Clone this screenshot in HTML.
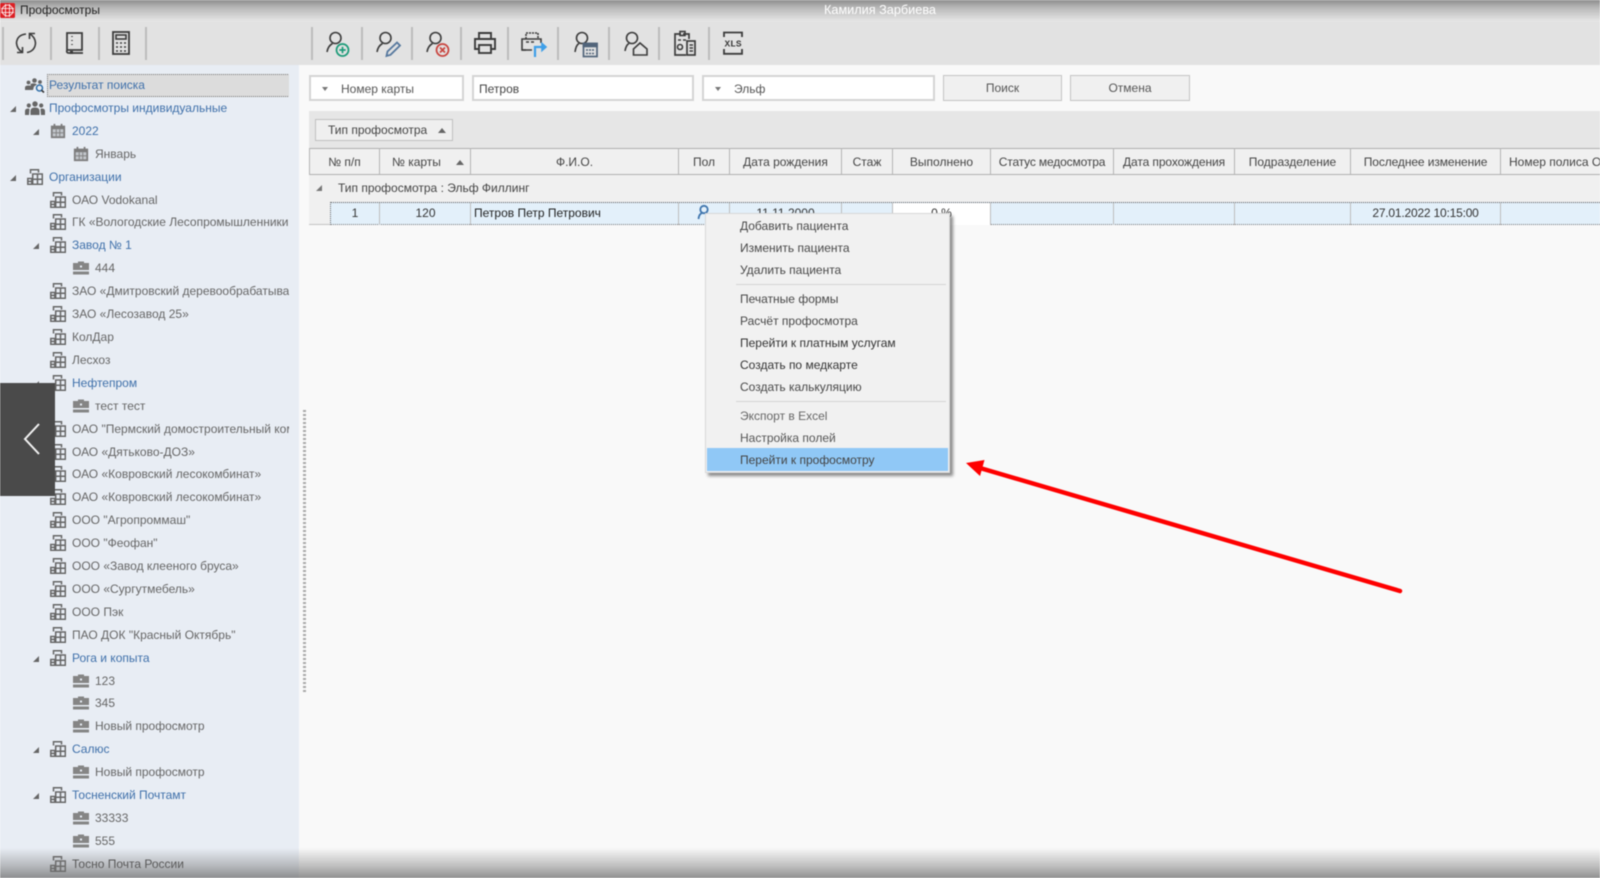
<!DOCTYPE html>
<html><head><meta charset="utf-8"><style>
html,body{margin:0;padding:0;width:1600px;height:878px;overflow:hidden;background:#f9f9f9}
*{box-sizing:border-box}
body{font-family:"Liberation Sans","Noto Sans CJK SC",sans-serif;font-size:12px;color:#444;position:relative}
#w{position:absolute;left:0;top:0;width:1600px;height:878px;filter:blur(.55px);overflow:hidden}
.a{position:absolute;white-space:nowrap}
#side{position:absolute;left:0;top:65px;width:299px;height:813px;background:#e8edf4}
#tree{position:absolute;left:0;top:9px;width:289px;overflow:hidden}
.r{position:relative;height:22.91px;line-height:22.91px;white-space:nowrap;color:#666;font-size:12px}
.r.b{color:#3f70aa}
.r svg{position:absolute}
.r .t{position:absolute;top:0}
.l0 .t{left:49px}.l0 svg{left:26px;top:3px}
.l1 .t{left:72px}.l1 svg{left:50px;top:3px}
.l2 .t{left:95px}.l2 svg{left:73px;top:4px}
.r i{position:absolute;width:0;height:0;border-left:6px solid transparent;border-bottom:6px solid #666;top:9px}
.l0 i{left:10px}.l1 i{left:33px}
.box{position:absolute;background:#fff;border:2px solid #d4d4d4;height:26px;top:75px;line-height:24px;color:#555}
.btn{position:absolute;background:#f0f0f0;border:1.5px solid #c4c4c4;height:26px;top:75px;line-height:24px;text-align:center;color:#555}
.dd{position:absolute;left:11px;top:10px;width:0;height:0;border:3px solid transparent;border-top:4px solid #777}
.hc{position:absolute;top:148px;height:27px;margin-left:1px;border-right:1.5px solid #b4b4b4;text-align:center;line-height:28.5px;color:#444;font-size:12px;overflow:hidden;white-space:nowrap}
.dc{position:absolute;top:203px;height:22px;margin-left:1px;border-right:1px solid #bdbdbd;line-height:21px;text-align:center;color:#333;white-space:nowrap;overflow:hidden}
#menu{position:absolute;left:705px;top:213px;width:245px;height:260px;background:#f1f1f1;border:1px solid #d8d8d8;box-shadow:3px 3px 3px rgba(0,0,0,.45)}
.m{position:absolute;left:34px;color:#484848;font-size:12px;line-height:22px;white-space:nowrap}
.s{position:absolute;left:30px;right:3px;height:1px;background:#d4d4d4}
.v{position:absolute;top:27px;width:1.5px;height:33px;background:#bcbcbc}
.ic{position:absolute;fill:none;stroke:#3c3c3c;stroke-width:1.6}
</style></head><body><div id="w">

<svg width="0" height="0" style="position:absolute"><defs>
<symbol id="bld" viewBox="0 0 16 16"><g fill="none" stroke="#666" stroke-width="1.5"><path d="M3.500 4.500V.8H11.500V3.500"/><rect x="5.700" y="5" width="9.600" height="10.300"/><path d="M10.500 5V15.300M5.700 10.200H15.300"/><rect x=".8" y="9.500" width="4" height="5.800"/><path d="M.8 12.400H4.800"/></g></symbol>
<symbol id="cal" viewBox="0 0 18 18"><path fill="#7c7c7c" d="M1 3H4V1H6V3H12V1H14V3H17V17H1Z"/><rect x="3" y="7" width="12" height="8" fill="#c2c6cb"/><path d="M3 11H15M7 7V15M11 7V15" stroke="#7c7c7c"/></symbol>
<symbol id="brf" viewBox="0 0 16 14"><path fill="#858585" d="M0 2H5V.5H11V2H16V9H0Z"/><rect x="0" y="10.500" width="16" height="3" fill="#858585"/><rect x="7" y="4.500" width="2" height="2" fill="#e8edf4"/></symbol>
<symbol id="ppl" viewBox="0 0 20 14"><g fill="#666"><circle cx="10" cy="3" r="2.700"/><circle cx="3.800" cy="4.500" r="2.100"/><circle cx="16.200" cy="4.500" r="2.100"/><path d="M5.500 14V10Q5.500 6.500 10 6.500T14.500 10V14Z"/><path d="M0 14V10Q0 7.500 3.500 7.500L4.500 8 4 14ZM20 14V10Q20 7.500 16.500 7.500L15.500 8 16 14Z"/></g></symbol>
<symbol id="pps" viewBox="0 0 20 15"><g fill="#666"><circle cx="9.500" cy="2.500" r="2.300"/><circle cx="3.500" cy="4.500" r="1.900"/><circle cx="15" cy="4" r="1.900"/><path d="M0 12V9.500Q0 7.500 3.500 7.500T7 9.500V12ZM5.500 6Q9.500 4.500 12 6.500L9 8.500 8 12H6.500Z"/></g><circle cx="14.500" cy="10" r="3" fill="none" stroke="#2f6ea8" stroke-width="1.500"/><path d="M16.500 12.200L19 14.500" stroke="#333" stroke-width="1.600"/></symbol>
</defs></svg>

<!-- title bar -->
<div class="a" style="left:0;top:0;width:1600px;height:22px;background:linear-gradient(#8d8d8d,#b8b8b8 35%,#e8e8e8)"></div>
<svg class="a" style="left:0;top:3px" width="15" height="15" viewBox="0 0 15 15"><rect x="0" y="0" width="15" height="15" rx="1.500" fill="#dd1f24"/><circle cx="7.500" cy="7.500" r="5.500" fill="none" stroke="#fff" stroke-width=".8"/><path d="M1 5.500H14M1 9.500H14M5.500 1V14M9.500 1V14" stroke="#fff" stroke-width=".8"/></svg>
<div class="a" style="left:20px;top:3px;line-height:15px;font-size:12px;color:#222">Профосмотры</div>
<div class="a" style="left:824px;top:2px;line-height:17px;font-size:12.700px;color:#fff">Камилия Зарбиева</div>

<!-- toolbar -->
<div class="a" style="left:0;top:22px;width:1600px;height:43px;background:#e2e2e2"></div>
<div class="v" style="left:2px"></div><div class="v" style="left:50px"></div><div class="v" style="left:98px"></div><div class="v" style="left:145px"></div>
<div class="v" style="left:311px"></div><div class="v" style="left:361px"></div><div class="v" style="left:411px"></div><div class="v" style="left:460px"></div><div class="v" style="left:507px"></div><div class="v" style="left:557px"></div><div class="v" style="left:608px"></div><div class="v" style="left:658px"></div><div class="v" style="left:708px"></div>

<!-- refresh -->
<svg class="ic" style="left:14px;top:30px" width="24" height="26" viewBox="0 0 24 26"><path d="M12 4Q3 5 2.500 13Q3 19 8 22"/><path d="M3 22.500H8.500V17"/><path d="M13 22.500Q21 21 21.500 13Q21 7 16 4"/><path d="M21 3.500H15.500V9"/></svg>
<!-- book -->
<svg class="ic" style="left:65px;top:31px" width="20" height="24" viewBox="0 0 20 24"><path d="M2 19V2H17V19H2ZM2 19Q1 22 4 22H18" stroke-width="1.800"/><path d="M7 5V6M7 9V10M7 13V14"/><rect x="5" y="20" width="3" height="3" fill="#3c3c3c" stroke="none"/></svg>
<!-- calculator -->
<svg class="ic" style="left:112px;top:31px" width="18" height="24" viewBox="0 0 18 24"><rect x="1" y="1" width="16" height="22" stroke-width="1.800"/><rect x="4" y="4" width="10" height="4"/><path d="M4 12H6M8 12H10M12 12H14M4 16H6M8 16H10M12 16H14M4 20H6M8 20H10M12 20H14" stroke-width="1.600"/></svg>

<!-- add -->
<svg class="ic" style="left:326px;top:31px" width="26" height="27" viewBox="0 0 26 27"><circle cx="9.500" cy="7" r="5.500"/><path d="M1 21Q2 15 6.500 12.500"/><circle cx="16.500" cy="19" r="6" stroke="#1d9b79" stroke-width="1.700"/><path d="M13.300 19H19.700M16.500 15.800V22.200" stroke="#1d9b79" stroke-width="1.700"/></svg>
<!-- edit -->
<svg class="ic" style="left:376px;top:31px" width="26" height="27" viewBox="0 0 26 27"><circle cx="9.500" cy="7" r="5.500"/><path d="M1 21Q2 15 6.500 12.500"/><path d="M10.500 25L11.500 20.500 21 11.500 24 14.500 14.500 23.800Z" stroke="#56789e" stroke-width="1.800"/></svg>
<!-- delete -->
<svg class="ic" style="left:426px;top:31px" width="26" height="27" viewBox="0 0 26 27"><circle cx="9.500" cy="7" r="5.500"/><path d="M1 21Q2 15 6.500 12.500"/><circle cx="16.500" cy="19" r="6" stroke="#c9453f" stroke-width="1.700"/><path d="M14 16.500L19 21.500M19 16.500L14 21.500" stroke="#c9453f" stroke-width="1.700"/></svg>
<!-- print -->
<svg class="ic" style="left:473px;top:31px" width="24" height="24" viewBox="0 0 24 24"><path d="M6 8V2H18V8" stroke-width="1.900"/><path d="M6 18H2V8H22V18H18" stroke-width="1.900"/><rect x="6" y="14" width="12" height="8" stroke-width="1.900"/></svg>
<!-- print arrow -->
<svg class="ic" style="left:521px;top:31px" width="28" height="27" viewBox="0 0 28 27"><path d="M5 8V2H17V8" stroke-dasharray="2 1"/><path d="M5 19H1V8H20V12"/><path d="M1 19H11M5 11H8M10 11H13"/><path d="M14 26V16H23" stroke="#3e9fe8" stroke-width="2.200"/><path d="M21 12.500L25 16 21 19.500Z" fill="#3e9fe8" stroke="#3e9fe8"/></svg>
<!-- user calc -->
<svg class="ic" style="left:574px;top:31px" width="26" height="27" viewBox="0 0 26 27"><circle cx="8" cy="7" r="5.500"/><path d="M1 21Q2 14 5 12.500"/><rect x="9.500" y="12.500" width="13.500" height="13" fill="#e2e2e2" stroke="#51647a" stroke-width="1.700"/><rect x="9.500" y="12.500" width="13.500" height="3" fill="#51647a" stroke="#51647a"/><path d="M12 19H21M12 22.500H21" stroke="#51647a" stroke-dasharray="2 1"/></svg>
<!-- user home -->
<svg class="ic" style="left:624px;top:31px" width="26" height="26" viewBox="0 0 26 26"><circle cx="8" cy="7" r="5.500"/><path d="M1 20Q2 14 5 12.500"/><path d="M9.500 24V18L16 12 23 18V24Z"/></svg>
<!-- clipboard -->
<svg class="ic" style="left:673px;top:30px" width="24" height="26" viewBox="0 0 24 26"><path d="M8 4H2V25H13M16 9V4H10" stroke-width="1.700"/><rect x="7" y="1.500" width="5" height="4"/><circle cx="7" cy="17" r="2.500" stroke-width="1.600"/><path d="M5 10H8M10 10H13"/><rect x="14" y="11" width="8" height="14" stroke-width="1.700"/><path d="M16.500 15H20M16.500 18H20M16.500 21H20"/></svg>
<!-- xls -->
<svg class="ic" style="left:722px;top:31px" width="22" height="24" viewBox="0 0 22 24"><path d="M2 6V1.500H20V6M2 18V22.800H20V18" stroke-width="1.800"/><text x="11" y="15.500" text-anchor="middle" font-family="Liberation Mono,monospace" font-size="9.500" font-weight="bold" fill="#3c3c3c" stroke="none">XLS</text></svg>

<!-- sidebar -->
<div id="side"><div id="tree">
<div class="r b l0"><div class="a" style="left:47px;top:0;width:243px;height:23px;background:#dcdcdc;border:1px dotted #777"></div><svg width="20" height="15" viewBox="0 0 20 15" style="left:25px;top:4px"><use href="#pps"/></svg><span class="t">Результат поиска</span></div>
<div class="r b l0"><i></i><svg width="20" height="14" style="left:25px;top:4px"><use href="#ppl"/></svg><span class="t">Профосмотры индивидуальные</span></div>
<div class="r b l1"><i></i><svg width="16" height="16"><use href="#cal"/></svg><span class="t">2022</span></div>
<div class="r l2"><svg width="16" height="16" style="top:3px"><use href="#cal"/></svg><span class="t">Январь</span></div>
<div class="r b l0"><i></i><svg width="16" height="16" style="left:27px"><use href="#bld"/></svg><span class="t">Организации</span></div>
<div class="r l1"><svg width="16" height="16"><use href="#bld"/></svg><span class="t">ОАО Vodokanal</span></div>
<div class="r l1"><svg width="16" height="16"><use href="#bld"/></svg><span class="t">ГК «Вологодские Лесопромышленники»</span></div>
<div class="r b l1"><i></i><svg width="16" height="16"><use href="#bld"/></svg><span class="t">Завод № 1</span></div>
<div class="r l2"><svg width="16" height="14"><use href="#brf"/></svg><span class="t">444</span></div>
<div class="r l1"><svg width="16" height="16"><use href="#bld"/></svg><span class="t">ЗАО «Дмитровский деревообрабатывающий</span></div>
<div class="r l1"><svg width="16" height="16"><use href="#bld"/></svg><span class="t">ЗАО «Лесозавод 25»</span></div>
<div class="r l1"><svg width="16" height="16"><use href="#bld"/></svg><span class="t">КолДар</span></div>
<div class="r l1"><svg width="16" height="16"><use href="#bld"/></svg><span class="t">Лесхоз</span></div>
<div class="r b l1"><i></i><svg width="16" height="16"><use href="#bld"/></svg><span class="t">Нефтепром</span></div>
<div class="r l2"><svg width="16" height="14"><use href="#brf"/></svg><span class="t">тест тест</span></div>
<div class="r l1"><svg width="16" height="16"><use href="#bld"/></svg><span class="t">ОАО "Пермский домостроительный комбинат"</span></div>
<div class="r l1"><svg width="16" height="16"><use href="#bld"/></svg><span class="t">ОАО «Дятьково-ДОЗ»</span></div>
<div class="r l1"><svg width="16" height="16"><use href="#bld"/></svg><span class="t">ОАО «Ковровский лесокомбинат»</span></div>
<div class="r l1"><svg width="16" height="16"><use href="#bld"/></svg><span class="t">ОАО «Ковровский лесокомбинат»</span></div>
<div class="r l1"><svg width="16" height="16"><use href="#bld"/></svg><span class="t">ООО "Агропроммаш"</span></div>
<div class="r l1"><svg width="16" height="16"><use href="#bld"/></svg><span class="t">ООО "Феофан"</span></div>
<div class="r l1"><svg width="16" height="16"><use href="#bld"/></svg><span class="t">ООО «Завод клееного бруса»</span></div>
<div class="r l1"><svg width="16" height="16"><use href="#bld"/></svg><span class="t">ООО «Сургутмебель»</span></div>
<div class="r l1"><svg width="16" height="16"><use href="#bld"/></svg><span class="t">ООО Пэк</span></div>
<div class="r l1"><svg width="16" height="16"><use href="#bld"/></svg><span class="t">ПАО ДОК "Красный Октябрь"</span></div>
<div class="r b l1"><i></i><svg width="16" height="16"><use href="#bld"/></svg><span class="t">Рога и копыта</span></div>
<div class="r l2"><svg width="16" height="14"><use href="#brf"/></svg><span class="t">123</span></div>
<div class="r l2"><svg width="16" height="14"><use href="#brf"/></svg><span class="t">345</span></div>
<div class="r l2"><svg width="16" height="14"><use href="#brf"/></svg><span class="t">Новый профосмотр</span></div>
<div class="r b l1"><i></i><svg width="16" height="16"><use href="#bld"/></svg><span class="t">Салюс</span></div>
<div class="r l2"><svg width="16" height="14"><use href="#brf"/></svg><span class="t">Новый профосмотр</span></div>
<div class="r b l1"><i></i><svg width="16" height="16"><use href="#bld"/></svg><span class="t">Тосненский Почтамт</span></div>
<div class="r l2"><svg width="16" height="14"><use href="#brf"/></svg><span class="t">33333</span></div>
<div class="r l2"><svg width="16" height="14"><use href="#brf"/></svg><span class="t">555</span></div>
<div class="r l1" style="color:#444"><svg width="16" height="16"><use href="#bld"/></svg><span class="t">Тосно Почта России</span></div>
</div></div>

<!-- splitter -->
<div class="a" style="left:303px;top:410px;width:3px;height:282px;background:repeating-linear-gradient(#a8a8a8 0 2px,transparent 2px 4px)"></div>

<!-- filter -->
<div class="box" style="left:309px;width:155px"><span class="dd"></span><span class="a" style="left:30px;top:0">Номер карты</span></div>
<div class="box" style="left:472px;width:222px;color:#444"><span class="a" style="left:5px;top:0">Петров</span></div>
<div class="box" style="left:702px;width:233px"><span class="dd"></span><span class="a" style="left:30px;top:0">Эльф</span></div>
<div class="btn" style="left:943px;width:119px">Поиск</div>
<div class="btn" style="left:1070px;width:120px">Отмена</div>

<!-- grid -->
<div class="a" style="left:309px;top:111px;width:1291px;height:37px;background:#e6e6e6"></div>
<div class="a" style="left:309px;top:148px;width:1291px;height:77px;background:#f0f0f0;border-bottom:1px solid #c4c4c4"></div>
<div class="a" style="left:315px;top:119px;width:138px;height:22px;background:#efefef;border:1.500px solid #c0c0c0;line-height:21px;padding-left:12px;color:#444">Тип профосмотра<span class="a" style="left:122px;top:8px;width:0;height:0;border:4px solid transparent;border-top:0;border-bottom:5px solid #666"></span></div>
<div class="a" style="left:309px;top:148px;width:1291px;height:27px;background:#f0f0f0;border-top:1.500px solid #b0b0b0;border-bottom:1.500px solid #b0b0b0"></div>
<div class="hc" style="left:309px;width:71px;margin-left:0;border-left:1.500px solid #b4b4b4">№ п/п</div>
<div class="hc" style="left:380px;width:90px;text-align:left;padding-left:11px">№ карты<span class="a" style="left:75px;top:12px;width:0;height:0;border:4px solid transparent;border-top:0;border-bottom:5px solid #666"></span></div>
<div class="hc" style="left:470px;width:208px">Ф.И.О.</div>
<div class="hc" style="left:678px;width:51px">Пол</div>
<div class="hc" style="left:729px;width:112px">Дата рождения</div>
<div class="hc" style="left:841px;width:51px">Стаж</div>
<div class="hc" style="left:892px;width:98px">Выполнено</div>
<div class="hc" style="left:990px;width:123px;letter-spacing:-.15px">Статус медосмотра</div>
<div class="hc" style="left:1113px;width:121px;letter-spacing:-.1px">Дата прохождения</div>
<div class="hc" style="left:1234px;width:116px">Подразделение</div>
<div class="hc" style="left:1350px;width:150px;letter-spacing:-.1px">Последнее изменение</div>
<div class="hc" style="left:1500px;width:100px;border:0;text-align:left;padding-left:8px">Номер полиса ОМС</div>

<div class="a" style="left:316px;top:185px;width:0;height:0;border-left:6px solid transparent;border-bottom:6px solid #777"></div>
<div class="a" style="left:338px;top:180px;line-height:17px;color:#444">Тип профосмотра : Эльф Филлинг</div>

<div class="a" style="left:330px;top:202px;width:1270px;height:23px;background:#e3f0fa;border-top:1px dotted #555;border-bottom:1px dotted #777;border-left:1px dotted #666"></div>
<div class="dc" style="left:331px;width:49px;margin-left:0">1</div>
<div class="dc" style="left:380px;width:90px">120</div>
<div class="dc" style="left:470px;width:208px;text-align:left;padding-left:3px;color:#222">Петров Петр Петрович</div>
<div class="dc" style="left:678px;width:51px"><svg class="a" style="left:18px;top:1px" width="14" height="16" viewBox="0 0 14 16"><circle cx="7" cy="5.500" r="3.700" fill="none" stroke="#3f75ad" stroke-width="1.800"/><path d="M1.500 15Q2 10 5 9M12.500 15Q12 10 9 9" fill="none" stroke="#3f75ad" stroke-width="1.800"/></svg></div>
<div class="dc" style="left:729px;width:112px">11.11.2000</div>
<div class="dc" style="left:841px;width:51px"></div>
<div class="dc" style="left:892px;width:98px;background:#fff">0 %</div>
<div class="dc" style="left:990px;width:123px"></div>
<div class="dc" style="left:1113px;width:121px"></div>
<div class="dc" style="left:1234px;width:116px"></div>
<div class="dc" style="left:1350px;width:150px;letter-spacing:-.2px">27.01.2022 10:15:00</div>

<!-- context menu -->
<div id="menu">
<div class="a" style="left:1px;top:234px;width:241px;height:23px;background:#90c8f6"></div>
<div class="m" style="top:1px">Добавить пациента</div>
<div class="m" style="top:23px">Изменить пациента</div>
<div class="m" style="top:45px">Удалить пациента</div>
<div class="s" style="top:70px"></div>
<div class="m" style="top:74px">Печатные формы</div>
<div class="m" style="top:96px">Расчёт профосмотра</div>
<div class="m" style="top:118px;color:#333">Перейти к платным услугам</div>
<div class="m" style="top:140px;color:#333">Создать по медкарте</div>
<div class="m" style="top:162px">Создать калькуляцию</div>
<div class="s" style="top:187px"></div>
<div class="m" style="top:191px;color:#666">Экспорт в Excel</div>
<div class="m" style="top:213px;color:#555">Настройка полей</div>
<div class="m" style="top:235px;color:#444">Перейти к профосмотру</div>
</div>

<!-- red arrow -->
<svg class="a" style="left:0;top:0" width="1600" height="878"><line x1="980" y1="468" x2="1400" y2="591" stroke="#fe0000" stroke-width="4.500" stroke-linecap="round"/><path d="M966 463L984.500 460 980 476Z" fill="#fe0000"/></svg>

<!-- left overlay -->
<div class="a" style="left:0;top:383px;width:54.500px;height:113px;background:#4a4a4a"></div>
<svg class="a" style="left:20px;top:422px" width="24" height="34" viewBox="0 0 24 34"><path d="M19 2L5 17 19 32" fill="none" stroke="#f2f2f2" stroke-width="2"/></svg>

<!-- bottom vignette -->
<div class="a" style="left:0;top:848px;width:1600px;height:30px;background:linear-gradient(rgba(120,120,120,0),rgba(120,120,120,.45) 60%,rgba(110,110,110,.75))"></div>
</div></body></html>
